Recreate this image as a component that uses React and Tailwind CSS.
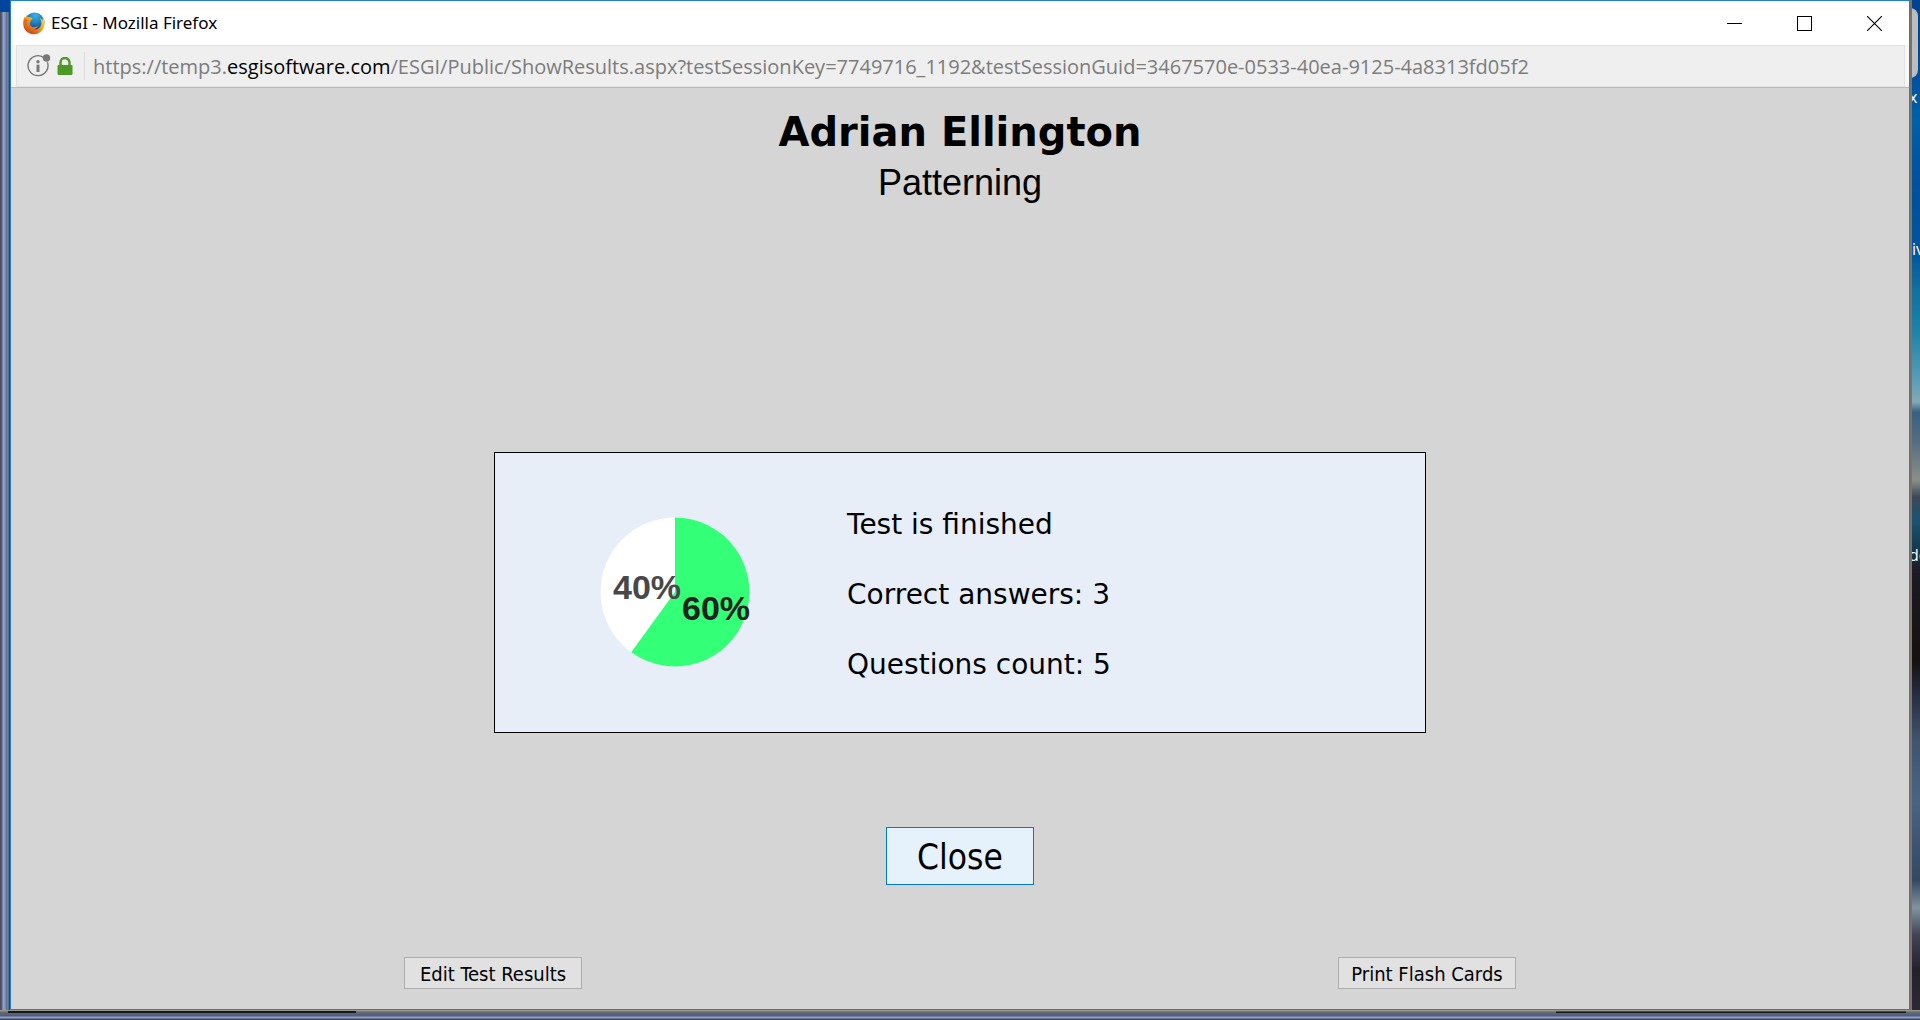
const VERDANA = "font-[Verdana,'DejaVu_Sans',sans-serif]";

function FirefoxLogo() {
  return (
    <svg viewBox="0 0 22 23" className="h-[23px] w-[22px] shrink-0" aria-hidden="true">
      <defs>
        <radialGradient id="globe" cx="0.55" cy="0.15" r="0.8">
          <stop offset="0" stopColor="#35b4e6" />
          <stop offset="0.6" stopColor="#1a6fb5" />
          <stop offset="1" stopColor="#0c3572" />
        </radialGradient>
        <linearGradient id="tail" x1="0.9" y1="0.1" x2="0.2" y2="1">
          <stop offset="0" stopColor="#fbe04a" />
          <stop offset="0.4" stopColor="#f8a81c" />
          <stop offset="1" stopColor="#c9321a" />
        </linearGradient>
      </defs>
      <circle cx="11.5" cy="10.5" r="10" fill="url(#globe)" />
      <path
        d="M19.500 4.500C21.800 8 22.300 12.500 20.300 16.500C18.200 20.600 14.500 22.500 10.500 22.300C4.500 22 .3 17.400.2 11.800C.1 8.500.8 6 1.900 4.200L2.200 6L4 2.800C4 4 4.300 4.700 4.800 5.200C6.200 4.900 7.700 5.200 8.500 5.800C9.300 5.800 9.600 6.300 9.200 6.900C8.700 7.700 7.600 8 7.500 8.700L7.500 10C7 10.600 6.600 11 6.800 12C7.200 14.300 9.400 15.600 11.500 15.200C12.800 15 13.800 14 14.800 14.200C14 16 12.500 17 10.500 17.200C14 18 17 16.200 18 13.200C18.900 10.500 18 7.600 16.800 6C18.200 6.700 19 7.800 19.400 8.900C19.800 7.500 19.800 6 19.500 4.500Z"
        fill="url(#tail)"
      />
      <path d="M1.500 7C.8 12 3 17 7.500 19.500C4 16.800 3 13.500 3.300 10.500L5 8Z" fill="#e2671d" />
    </svg>
  );
}

function TitleBar() {
  const button = "flex h-[44px] w-[70px] items-center justify-center";
  return (
    <header className="flex h-[44px] items-center bg-white pl-3">
      <FirefoxLogo />
      <h1 className="ml-[6px] grow font-['Segoe_UI','Noto_Sans',sans-serif] text-[17px] leading-6 text-black">
        ESGI - Mozilla Firefox
      </h1>
      <button type="button" aria-label="Minimize" className={button}>
        <svg viewBox="0 0 15 15" className="h-[15px] w-[15px]" shapeRendering="crispEdges">
          <path d="M0 7.500H15" stroke="#000" />
        </svg>
      </button>
      <button type="button" aria-label="Maximize" className={button}>
        <svg viewBox="0 0 15 15" className="h-[15px] w-[15px]" shapeRendering="crispEdges">
          <rect x="0.5" y="0.5" width="14" height="14" fill="none" stroke="#000" />
        </svg>
      </button>
      <button type="button" aria-label="Close window" className={button}>
        <svg viewBox="0 0 15 15" className="h-[15px] w-[15px]">
          <path d="M0 0L15 15M15 0L0 15" stroke="#000" strokeWidth="1.1" />
        </svg>
      </button>
    </header>
  );
}

function AddressBar() {
  return (
    <div className="flex h-[43px] border-b border-[#bcbcbc] bg-[#f7f7f7] pr-1 pl-[5px]">
      <div className="flex grow items-center border border-[#e2e2e2] bg-[#efefef] pl-[10px] font-['Segoe_UI','Open_Sans',sans-serif] text-[20px] leading-6 whitespace-nowrap text-[#7c7c7c]">
        <svg viewBox="0 0 24 24" className="h-6 w-6 shrink-0" aria-label="Site information">
          <path d="M16.500 3.300A10 10 0 1 0 20.400 8.200" fill="none" stroke="#777" strokeWidth="1.400" />
          <circle cx="19.500" cy="4" r="3.700" fill="#777" />
          <circle cx="11" cy="7.700" r="1.700" fill="#777" />
          <path d="M11 10.700V18" stroke="#777" strokeWidth="3" />
        </svg>
        <svg viewBox="0 0 16 18" className="ml-[6px] h-[18px] w-4 shrink-0" aria-label="Secure connection">
          <path d="M3.500 9V5.500A4.500 4.500 0 0 1 12.500 5.500V9" fill="none" stroke="#4c9a25" strokeWidth="2.400" />
          <rect x="0.500" y="8" width="15" height="10" rx="1.300" fill="#4c9a25" />
        </svg>
        <span className="ml-[11px] h-7 w-px bg-[#dcdcdc]" />
        <p className="ml-2 pt-[2px]">
          https://temp3.<span className="text-black">esgisoftware.com</span>
          /ESGI/Public/ShowResults.aspx?testSessionKey=7749716_1192&amp;testSessionGuid=3467570e-0533-40ea-9125-4a8313fd05f2
        </p>
      </div>
    </div>
  );
}

function ResultPie() {
  return (
    <svg viewBox="0 0 150 150" className="mt-16 h-[150px] w-[150px] shrink-0" role="img" aria-label="60% correct, 40% incorrect">
      <circle cx="75" cy="75" r="74.500" fill="#fff" />
      <path d="M75 75V.5A74.500 74.500 0 1 1 31.200 135.300Z" fill="#33ff77" />
      <g className="font-['Liberation_Sans',Arial,sans-serif] text-[34px] font-bold">
        <text x="13" y="82" fill="#484848">40%</text>
        <text x="82" y="103" fill="#222">60%</text>
      </g>
    </svg>
  );
}

function ResultCard() {
  return (
    <section className="flex w-[49.1%] items-start border border-black bg-[#e7eef8] pl-[105px]">
      <ResultPie />
      <div className={`${VERDANA} ml-[97px] pt-[37px] pb-8 text-[28px] leading-[70px] text-black`}>
        <p>Test is finished</p>
        <p>Correct answers: 3</p>
        <p>Questions count: 5</p>
      </div>
    </section>
  );
}

function Results() {
  const small =
    "h-8 w-[178px] border border-[#adadad] bg-[#e1e1e1] pt-px font-[Tahoma,'DejaVu_Sans_Condensed','Noto_Sans',sans-serif] text-[20px] leading-6 text-black";
  return (
    <main className="flex grow flex-col items-center bg-[#d5d5d5] pt-[18px] pb-5">
      <h2 className={`${VERDANA} text-[40px] leading-[52px] font-bold text-black`}>Adrian Ellington</h2>
      <p className="font-['Liberation_Sans',Arial,sans-serif] text-[36px] leading-[50px] text-black">Patterning</p>
      <div className="mt-[244px] flex w-full justify-center">
        <ResultCard />
      </div>
      <button
        type="button"
        className="mt-[94px] h-[58px] border border-[#0078d7] bg-[#e5f1fb] px-[30px] pt-[2px] font-[Tahoma,'DejaVu_Sans_Condensed','Noto_Sans',sans-serif] text-[35px] leading-[48px] text-black"
      >
        Close
      </button>
      <div className="mt-auto flex w-full justify-between px-[393px]">
        <button type="button" className={small}>Edit Test Results</button>
        <button type="button" className={small}>Print Flash Cards</button>
      </div>
    </main>
  );
}

function DesktopRight() {
  return (
    <div
      aria-hidden="true"
      className="relative w-[10px] shrink-0 overflow-hidden border-l-2 border-[#77736f] font-['Segoe_UI','Open_Sans',sans-serif] text-[16px] leading-5 text-white"
    >
      <div className="absolute inset-0 bg-[linear-gradient(to_bottom,#00428f_0px,#004a9c_60px,#0060a8_120px,#00509e_180px,#00549c_250px,#11709f_290px,#1c82a8_330px,#5a9db8_380px,#86a9b4_402px,#38617f_412px,#536b80_440px,#8b8f8a_480px,#3a4857_497px,#1c5270_520px,#12384f_550px,#1c1a22_570px,#17100f_660px,#24293a_690px,#40536f_740px,#4b6484_800px,#344762_880px,#8293a0_908px,#424354_935px,#26202a_970px,#2e2a38_1020px)]" />
      <div className="absolute top-2 -left-3 h-[70px] w-[18px] rounded-lg bg-[#bdbdbd]" />
      <span className="absolute top-[87px] -left-[3px]">x</span>
      <span className="absolute top-[239px] left-0">iv</span>
      <span className="absolute top-[545px] -left-[3px]">de</span>
    </div>
  );
}

export default function App() {
  return (
    <div className="flex min-h-screen flex-col bg-[#5a6480]">
      <div className="flex grow">
        <div
          aria-hidden="true"
          className="w-[10px] shrink-0 bg-[linear-gradient(to_right,#4a4a52_0px,#5a6078_2px,#93a6d0_3px,#8396c0_5px,#55678c_7px,#7f93b8_8px,#3a4250_9px,#3a4250_10px)]"
        >
          <div className="h-3 bg-[#00449c]" />
        </div>
        <div className="flex min-w-0 grow flex-col border border-[#1f7fd0]">
          <TitleBar />
          <AddressBar />
          <Results />
        </div>
        <DesktopRight />
      </div>
      <div aria-hidden="true" className="h-[10px] bg-[linear-gradient(to_bottom,#a8a49c_0px,#6c6c6c_2px,#56627c_4px,#4e5c7e_6px,#8c9fcb_7px,#8c9fcb_8px,#454a5a_9px,#3a3d48_10px)]">
        <div className="flex justify-between pt-px pr-[14px] pl-2">
          <div className="h-[2px] w-[348px] bg-[#161818]" />
          <div className="h-[2px] w-[350px] border-t border-[#3c5c0c] bg-[#161818]" />
        </div>
      </div>
    </div>
  );
}
